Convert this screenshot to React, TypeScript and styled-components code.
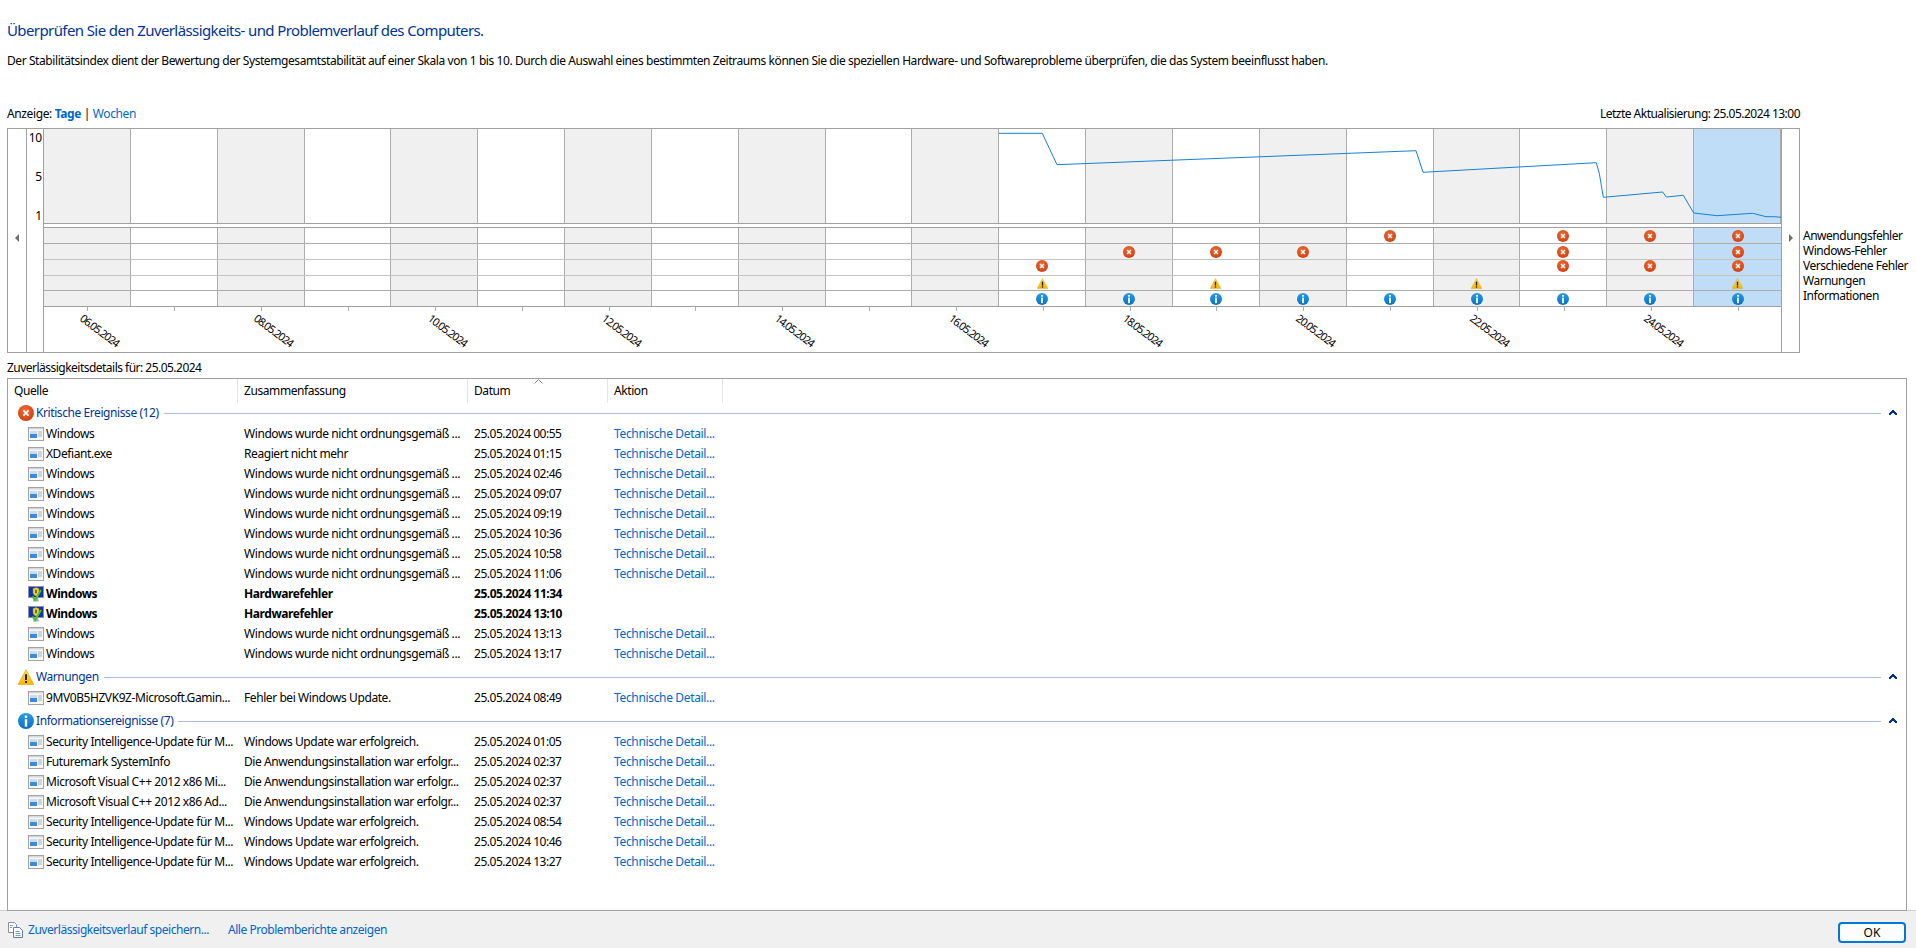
import React from "react";
import styled, { createGlobalStyle } from "styled-components";

const FONT = `"Noto Sans", "Open Sans", "Liberation Sans", sans-serif`;

const Global = createGlobalStyle`
  html, body { margin: 0; padding: 0; background: #fff; }
  body { font: 12px/16px ${FONT}; color: #000; letter-spacing: -0.42px; overflow: hidden; }
`;

const Page = styled.div`
  width: 1916px;
  height: 948px;
  display: flex;
  flex-direction: column;
  overflow: hidden;
`;
const Main = styled.main`
  flex: 1;
  min-height: 0;
  position: relative;
  z-index: 1;
  display: flex;
  flex-direction: column;
  padding: 20px 9px 0 7px;
`;
const Title = styled.h1`
  margin: 0;
  font-size: 15px;
  line-height: 21px;
  font-weight: 400;
  letter-spacing: -0.6px;
  color: #003399;
`;
const Description = styled.p`
  margin: 12px 0 0;
  white-space: nowrap;
`;
const ViewBar = styled.div`
  margin: 37px 107px 6px 0;
  display: flex;
  justify-content: space-between;
  letter-spacing: -0.52px;
`;
const ViewSwitch = styled.span`
  letter-spacing: -0.38px;
`;
const Link = styled.a<{ $bold?: boolean }>`
  color: #0066cc;
  font-weight: ${(p) => (p.$bold ? 700 : 400)};
  white-space: nowrap;
`;
const ChartRow = styled.section`
  display: flex;
  height: 225px;
`;
const Chart = styled.div`
  width: 1793px;
  box-sizing: border-box;
  border: 1px solid #a0a0a0;
  display: flex;
  background: #fff;
`;
const ScrollCol = styled.div`
  width: 18px;
  flex: none;
  padding-top: 105px;
  display: flex;
  justify-content: center;
  align-items: flex-start;
`;
const ScrollArrow = styled.i<{ $right?: boolean }>`
  width: 0;
  height: 0;
  border-top: 4px solid transparent;
  border-bottom: 4px solid transparent;
  ${(p) => (p.$right ? "border-left: 4px solid #6f6f6f;" : "border-right: 4px solid #6f6f6f;")}
`;
const Axis = styled.div`
  width: 15px;
  flex: none;
  border-left: 1px solid #a0a0a0;
  border-right: 1px solid #a0a0a0;
  display: flex;
  flex-direction: column;
  align-items: flex-end;
  padding: 1px 1px 0 0;
  line-height: 16px;
  letter-spacing: -0.2px;
  gap: 23px;
`;
const Plot = styled.div`
  width: 1737px;
  flex: none;
  border-right: 1px solid #a0a0a0;
  display: flex;
  flex-direction: column;
`;
const Band = styled.div`
  position: relative;
  height: 94px;
  flex: none;
  display: grid;
  grid-template-columns: repeat(20, 1fr);
  border-bottom: 1px solid #a0a0a0;
`;
const Trace = styled.svg`
  position: absolute;
  left: 0;
  top: 0;
  width: 1737px;
  height: 94px;
  overflow: visible;
`;
const Gap = styled.div`
  height: 3px;
  flex: none;
  border-bottom: 1px solid #a0a0a0;
`;
const IconRow = styled.div<{ $h: number; $line: string }>`
  height: ${(p) => p.$h}px;
  flex: none;
  box-sizing: border-box;
  display: grid;
  grid-template-columns: repeat(20, 1fr);
  border-bottom: 1px solid ${(p) => p.$line};
`;
const Cell = styled.div<{ $kind: "gray" | "white" | "sel"; $lift?: boolean }>`
  background: ${(p) => (p.$kind === "gray" ? "#f0f0f0" : p.$kind === "sel" ? "#bfddf6" : "#fff")};
  border-right: 1px solid #acacac;
  display: flex;
  align-items: center;
  justify-content: center;
  min-width: 0;
  padding-bottom: ${(p) => (p.$lift ? 3 : 0)}px;
  box-sizing: border-box;
  &:last-child { border-right: 0; }
`;
const DateAxis = styled.div`
  flex: 1;
  display: grid;
  grid-template-columns: repeat(20, 1fr);
`;
const Tick = styled.div`
  position: relative;
  &::before {
    content: "";
    position: absolute;
    left: 50%;
    top: 0;
    width: 1px;
    height: 4px;
    background: #b0b0b0;
  }
`;
const TickLabel = styled.span`
  position: absolute;
  left: calc(50% - 2px);
  top: 5px;
  font-size: 11px;
  line-height: 12px;
  letter-spacing: -1.05px;
  white-space: nowrap;
  transform-origin: 0 0;
  transform: rotate(37deg);
`;
const Legend = styled.ul`
  list-style: none;
  margin: 0;
  padding: 100px 0 0 3px;
  line-height: 15px;
  letter-spacing: -0.48px;
  white-space: nowrap;
`;
const DetailsLabel = styled.div`
  margin-top: 7px;
  letter-spacing: -0.52px;
`;
const Table = styled.section`
  flex: 1;
  min-height: 0;
  margin-top: 2px;
  border: 1px solid #a0a0a0;
  background: #fff;
  box-sizing: border-box;
`;
const columns = `grid-template-columns: 230px 230px 140px 115px;`;
const Head = styled.div`
  height: 24px;
  display: grid;
  ${columns}
  position: relative;
`;
const HeadCell = styled.div`
  padding-left: 6px;
  line-height: 24px;
  border-right: 1px solid #e5e5e5;
`;
const SortMark = styled.svg`
  position: absolute;
  left: 526px;
  top: 0;
  width: 9px;
  height: 5px;
`;
const Group = styled.div`
  margin-bottom: 3px;
`;
const GroupHead = styled.div`
  height: 20px;
  margin-bottom: 1px;
  display: flex;
  align-items: center;
  padding: 0 9px 0 10px;
  color: #003399;
  white-space: nowrap;
`;
const GroupTitle = styled.span`
  margin-left: 2px;
`;
const GroupRule = styled.i`
  flex: 1;
  height: 1px;
  margin: 0 8px 0 5px;
  background: #a9bfe3;
`;
const Row = styled.div<{ $bold?: boolean }>`
  height: 20px;
  display: grid;
  ${columns}
  line-height: 20px;
  font-weight: ${(p) => (p.$bold ? 700 : 400)};
  white-space: nowrap;
`;
const SourceCell = styled.div`
  display: flex;
  align-items: center;
  gap: 2px;
  padding-left: 20px;
`;
const TextCell = styled.div`
  padding-left: 6px;
`;
const DateCell = styled(TextCell)`
  letter-spacing: -0.48px;
`;
const ActionCell = styled(TextCell)`
  letter-spacing: -0.34px;
`;
const Footer = styled.footer`
  height: 38px;
  flex: none;
  margin-top: -1px;
  box-sizing: border-box;
  border-top: 1px solid #d0d0d0;
  background: #f0f0f0;
  display: flex;
  align-items: center;
  padding: 0 10px 0 8px;
`;
const FooterLinks = styled.div`
  flex: 1;
  display: flex;
  align-items: center;
  gap: 5px;
  letter-spacing: -0.46px;
`;
const SecondLink = styled(Link)`
  margin-left: 14px;
`;
const OkButton = styled.button`
  width: 68px;
  height: 21px;
  margin-top: 6px;
  padding: 0;
  background: #fdfdfd;
  border: 2px solid #0078d7;
  border-radius: 4px;
  font: 12px/16px ${FONT};
  color: #000;
`;

const Err = ({ s = 12 }: { s?: number }) => (
  <svg width={s} height={s} viewBox="0 0 16 16" style={{ flex: "none" }}>
    <defs>
      <radialGradient id="e" cx="45%" cy="35%" r="70%">
        <stop offset="0" stopColor="#f06a32" />
        <stop offset="1" stopColor="#cf3d10" />
      </radialGradient>
    </defs>
    <circle cx="8" cy="8" r="8" fill="url(#e)" />
    <path d="M5.4 5.4l5.2 5.2M10.6 5.4l-5.2 5.2" stroke="#fff" strokeWidth="1.9" fill="none" />
  </svg>
);
const Info = ({ s = 12 }: { s?: number }) => (
  <svg width={s} height={s} viewBox="0 0 16 16" style={{ flex: "none" }}>
    <defs>
      <linearGradient id="i" x1="0" y1="0" x2="0" y2="1">
        <stop offset="0" stopColor="#2a9be6" />
        <stop offset="1" stopColor="#0870c4" />
      </linearGradient>
    </defs>
    <circle cx="8" cy="8" r="8" fill="url(#i)" />
    <rect x="6.8" y="2.6" width="2.4" height="2.4" fill="#fff" />
    <rect x="6.8" y="6.2" width="2.4" height="7.4" fill="#fff" />
  </svg>
);
const Warn = ({ s = 12 }: { s?: number }) => (
  <svg width={s} height={s} viewBox="0 0 16 16" style={{ flex: "none" }}>
    <defs>
      <linearGradient id="w" x1="0" y1="0" x2="0" y2="1">
        <stop offset="0" stopColor="#fde24f" />
        <stop offset="1" stopColor="#f7b500" />
      </linearGradient>
    </defs>
    <path d="M8 .6L15.8 15.4H.2z" fill="url(#w)" stroke="#e0a000" strokeWidth=".6" />
    <rect x="7" y="5.2" width="2" height="5.8" fill="#222" />
    <rect x="7" y="12" width="2" height="2" fill="#222" />
  </svg>
);
const EventIcon = () => (
  <svg width="16" height="16" viewBox="0 0 16 16" style={{ flex: "none" }}>
    <rect x=".5" y="1.5" width="15" height="13" fill="#f8f8f8" stroke="#a3a3a3" />
    <rect x="1" y="2" width="14" height="1.500" fill="#d5d8dd" />
    <rect x="2" y="5" width="7" height="7" fill="#c6dcf2" />
    <rect x="2" y="8" width="7" height="4" fill="#3d8ad8" />
    <path d="M10 6h4M10 8h4M10 10h4" stroke="#a8b0b9" fill="none" />
  </svg>
);
const SecurityIcon = () => (
  <svg width="16" height="16" viewBox="0 0 16 16" style={{ flex: "none" }}>
    <rect x=".5" y=".5" width="15" height="11" fill="#1330b8" stroke="#8a96a0" />
    <path d="M5 15.500h6l-1-4H6z" fill="#a6adb3" />
    <path d="M8 1.600l3 1v3.600c0 2-1.400 3.200-3 4-1.600-.8-3-2-3-4V2.600z" fill="#e9d530" stroke="#8f8420" strokeWidth=".5" />
    <rect x="7.200" y="3.800" width="1.600" height="3.400" fill="#5c5410" />
    <path d="M4.500 10.500l2.500 3.500 6-10" stroke="#4dc02c" strokeWidth="2" fill="none" />
  </svg>
);
const PagesIcon = () => (
  <svg width="15" height="16" viewBox="0 0 15 16" style={{ flex: "none" }}>
    <path d="M.5.5h6l2 2v8h-8z" fill="#fff" stroke="#8b8f96" />
    <path d="M5.500 5.500h6l3 3v7h-9z" fill="#fff" stroke="#5a7fae" />
    <path d="M2 3.500h3M2 5.500h2M7.500 9.500h4M7.500 11.500h5M7.500 13.500h5" stroke="#7d9cc4" fill="none" />
  </svg>
);
const Collapse = () => (
  <svg width="8" height="6" viewBox="0 0 8 6" style={{ flex: "none" }}>
    <path d="M3 0h2v1h1v1h1v1h1v2H6V4H5V3H3v1H2v1H0V3h1V2h1V1h1z" fill="#003399" />
  </svg>
);

const LINE: [number, number][] = [
  [997.7, 133.3], [1041.3, 133.3], [1056, 164.7], [1415, 150.7], [1422, 172.3],
  [1595.3, 162.7], [1598.3, 173.3], [1602.3, 197.3], [1661.7, 192], [1665.3, 197],
  [1682.3, 195.3], [1692.7, 213], [1716, 215.7], [1751.7, 213.3], [1765, 216.7],
  [1773.3, 216.7], [1780, 217.3],
];
const tracePoints = LINE.map(([x, y]) => `${x - 43},${y - 129}`).join(" ");

type Mark = "e" | "w" | "i";
const ICON_ROWS: { mark: Mark; cols: number[]; h: number; line: string; lift?: boolean }[] = [
  { mark: "e", cols: [15, 17, 18, 19], h: 16, line: "#acacac" },
  { mark: "e", cols: [12, 13, 14, 17, 19], h: 16, line: "#c4c4c4" },
  { mark: "e", cols: [11, 17, 18, 19], h: 16, line: "#c4c4c4", lift: true },
  { mark: "w", cols: [11, 13, 16, 19], h: 15, line: "#acacac" },
  { mark: "i", cols: [11, 12, 13, 14, 15, 16, 17, 18, 19], h: 16, line: "#a0a0a0" },
];
const idx = Array.from({ length: 20 }, (_, i) => i);
const kindOf = (i: number): "gray" | "white" | "sel" => (i === 19 ? "sel" : i % 2 === 0 ? "gray" : "white");
const dateOf = (i: number) => `${String(6 + i).padStart(2, "0")}.05.2024`;
const markIcon = (m: Mark) => (m === "e" ? <Err /> : m === "w" ? <Warn s={11} /> : <Info />);

const SHUT = "Windows wurde nicht ordnungsgemäß ...";
const DETAIL = "Technische Detail...";
const INST = "Die Anwendungsinstallation war erfolgr...";
const WU = "Windows Update war erfolgreich.";
const SEC = "Security Intelligence-Update für M...";

type Ev = [string, string, string, boolean?];
const CRITICAL: Ev[] = [
  ["Windows", SHUT, "00:55"],
  ["XDefiant.exe", "Reagiert nicht mehr", "01:15"],
  ["Windows", SHUT, "02:46"],
  ["Windows", SHUT, "09:07"],
  ["Windows", SHUT, "09:19"],
  ["Windows", SHUT, "10:36"],
  ["Windows", SHUT, "10:58"],
  ["Windows", SHUT, "11:06"],
  ["Windows", "Hardwarefehler", "11:34", true],
  ["Windows", "Hardwarefehler", "13:10", true],
  ["Windows", SHUT, "13:13"],
  ["Windows", SHUT, "13:17"],
];
const WARNINGS: Ev[] = [["9MV0B5HZVK9Z-Microsoft.Gamin...", "Fehler bei Windows Update.", "08:49"]];
const INFOS: Ev[] = [
  [SEC, WU, "01:05"],
  ["Futuremark SystemInfo", INST, "02:37"],
  ["Microsoft Visual C++ 2012 x86 Mi...", INST, "02:37"],
  ["Microsoft Visual C++ 2012 x86 Ad...", INST, "02:37"],
  [SEC, WU, "08:54"],
  [SEC, WU, "10:46"],
  [SEC, WU, "13:27"],
];

const EventGroup = ({ icon, title, rows }: { icon: React.ReactNode; title: string; rows: Ev[] }) => (
  <Group>
    <GroupHead>
      {icon}
      <GroupTitle>{title}</GroupTitle>
      <GroupRule />
      <Collapse />
    </GroupHead>
    {rows.map(([src, sum, time, bold], i) => (
      <Row key={i} $bold={bold}>
        <SourceCell>
          {bold ? <SecurityIcon /> : <EventIcon />}
          {src}
        </SourceCell>
        <TextCell>{sum}</TextCell>
        <DateCell>25.05.2024 {time}</DateCell>
        <ActionCell>{bold ? null : <Link>{DETAIL}</Link>}</ActionCell>
      </Row>
    ))}
  </Group>
);

export default function App() {
  return (
    <Page>
      <Global />
      <Main>
        <Title>Überprüfen Sie den Zuverlässigkeits- und Problemverlauf des Computers.</Title>
        <Description>
          Der Stabilitätsindex dient der Bewertung der Systemgesamtstabilität auf einer Skala von 1 bis 10. Durch die Auswahl eines bestimmten Zeitraums können Sie die speziellen Hardware- und Softwareprobleme überprüfen, die das System beeinflusst haben.
        </Description>
        <ViewBar>
          <ViewSwitch>
            Anzeige: <Link $bold>Tage</Link> | <Link>Wochen</Link>
          </ViewSwitch>
          <span>Letzte Aktualisierung: 25.05.2024 13:00</span>
        </ViewBar>
        <ChartRow>
          <Chart>
            <ScrollCol>
              <ScrollArrow />
            </ScrollCol>
            <Axis>
              <span>10</span>
              <span>5</span>
              <span>1</span>
            </Axis>
            <Plot>
              <Band>
                {idx.map((i) => (
                  <Cell key={i} $kind={kindOf(i)} />
                ))}
                <Trace viewBox="0 0 1737 94">
                  <polyline points={tracePoints} fill="none" stroke="#1581d8" strokeWidth="1" />
                </Trace>
              </Band>
              <Gap />
              {ICON_ROWS.map((r, ri) => (
                <IconRow key={ri} $h={r.h} $line={r.line}>
                  {idx.map((i) => (
                    <Cell key={i} $kind={kindOf(i)} $lift={r.lift}>
                      {r.cols.includes(i) ? markIcon(r.mark) : null}
                    </Cell>
                  ))}
                </IconRow>
              ))}
              <DateAxis>
                {idx.map((i) => (
                  <Tick key={i}>{i % 2 === 0 ? <TickLabel>{dateOf(i)}</TickLabel> : null}</Tick>
                ))}
              </DateAxis>
            </Plot>
            <ScrollCol>
              <ScrollArrow $right />
            </ScrollCol>
          </Chart>
          <Legend>
            <li>Anwendungsfehler</li>
            <li>Windows-Fehler</li>
            <li>Verschiedene Fehler</li>
            <li>Warnungen</li>
            <li>Informationen</li>
          </Legend>
        </ChartRow>
        <DetailsLabel>Zuverlässigkeitsdetails für: 25.05.2024</DetailsLabel>
        <Table>
          <Head>
            <HeadCell>Quelle</HeadCell>
            <HeadCell>Zusammenfassung</HeadCell>
            <HeadCell>Datum</HeadCell>
            <HeadCell>Aktion</HeadCell>
            <SortMark viewBox="0 0 9 5">
              <path d="M.5 4.500l4-4 4 4" fill="none" stroke="#8a8a8a" />
            </SortMark>
          </Head>
          <EventGroup icon={<Err s={16} />} title="Kritische Ereignisse (12)" rows={CRITICAL} />
          <EventGroup icon={<Warn s={16} />} title="Warnungen" rows={WARNINGS} />
          <EventGroup icon={<Info s={16} />} title="Informationsereignisse (7)" rows={INFOS} />
        </Table>
      </Main>
      <Footer>
        <FooterLinks>
          <PagesIcon />
          <Link>Zuverlässigkeitsverlauf speichern...</Link>
          <SecondLink>Alle Problemberichte anzeigen</SecondLink>
        </FooterLinks>
        <OkButton>OK</OkButton>
      </Footer>
    </Page>
  );
}
